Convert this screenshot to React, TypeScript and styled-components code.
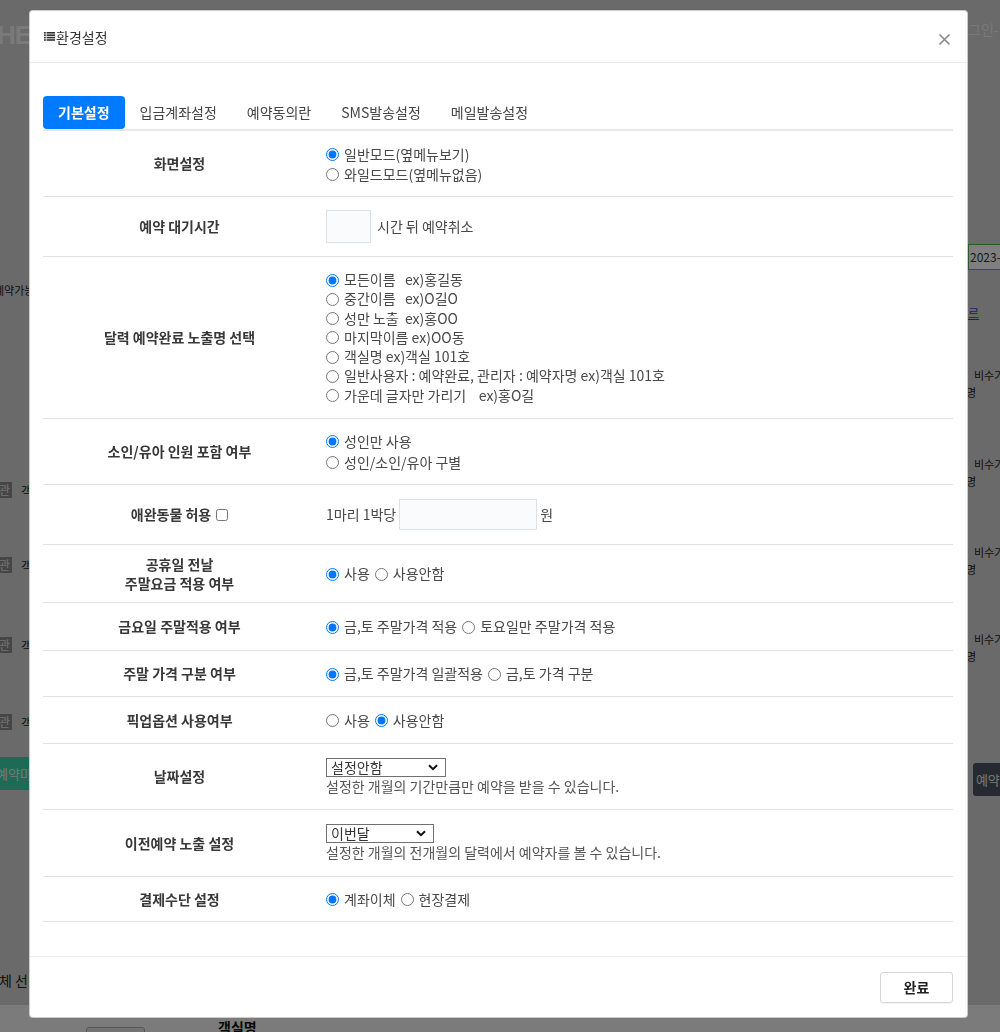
import React from 'react';
import styled, { createGlobalStyle } from 'styled-components';

const GlobalStyle = createGlobalStyle`
  html, body {
    margin: 0;
    padding: 0;
  }
  body {
    width: 1000px;
    height: 1032px;
    overflow: hidden;
    font-family: 'Noto Sans CJK KR', 'Noto Sans', sans-serif;
    font-size: 14px;
    color: #333;
  }
`;

/* ---------- page behind the dialog ---------- */

const Backdrop = styled.div`
  width: 1000px;
  height: 1032px;
  background: #d4d4d4;
  display: flex;
  flex-direction: column;
  overflow: hidden;
`;

const BackMain = styled.div`
  flex: 1;
  display: flex;
  justify-content: space-between;
`;

const Rail = styled.div<{ $w: number }>`
  width: ${p => p.$w}px;
  display: flex;
  flex-direction: column;
  align-items: flex-start;
  white-space: nowrap;
`;

const BgLogo = styled.div`
  margin: 22px 0 0 -3px;
  font-family: 'Liberation Sans', sans-serif;
  font-size: 26px;
  line-height: 26px;
  font-weight: bold;
  letter-spacing: -1px;
  color: #f4f4f4;
`;

const BgText = styled.div<{ $mt: number; $ml?: number; $color?: string; $size?: number }>`
  margin-top: ${p => p.$mt}px;
  margin-left: ${p => p.$ml ?? 0}px;
  font-size: ${p => p.$size ?? 11}px;
  line-height: 14px;
  color: ${p => p.$color ?? '#222'};
`;

const BgBadgeRow = styled.div<{ $mt: number }>`
  margin-top: ${p => p.$mt}px;
  display: flex;
  align-items: center;
  gap: 9px;
  height: 16px;
  font-size: 12px;
  color: #222;
`;

const BgBadge = styled.span`
  background: #8c8c8c;
  color: #e8e8e8;
  padding: 0 2px;
  line-height: 16px;
  margin-left: -3px;
`;

const BgButton = styled.div<{ $mt: number; $bg: string; $ml?: number }>`
  margin-top: ${p => p.$mt}px;
  margin-left: ${p => p.$ml ?? 0}px;
  height: 33px;
  padding: 0 8px 0 0;
  border-radius: 3px;
  background: ${p => p.$bg};
  color: #eee;
  font-size: 13px;
  line-height: 33px;
`;

const BgInput = styled.div`
  margin-top: 208px;
  width: 40px;
  height: 26px;
  box-sizing: border-box;
  border: 1px solid #52b752;
  background: #fff;
  font-size: 12px;
  line-height: 24px;
  padding-left: 1px;
  color: #333;
`;

const BgLink = styled.div`
  margin-top: 36px;
  font-size: 12px;
  line-height: 14px;
  color: #1a4bd6;
  text-decoration: underline;
`;

const BackBottom = styled.div`
  height: 27px;
  background: #f7f7f7;
  display: flex;
  align-items: flex-start;
  padding-left: 86px;
`;

const BgBox = styled.div`
  margin-top: 22px;
  width: 57px;
  height: 14px;
  border: 1px solid #aaa;
  border-radius: 3px;
  background: #e6e6e6;
`;

const BgHeading = styled.div`
  margin: 12px 0 0 73px;
  font-size: 14px;
  font-weight: bold;
  color: #111;
`;

/* ---------- dialog ---------- */

const Overlay = styled.div`
  position: fixed;
  inset: 0;
  background: rgba(0, 0, 0, 0.5);
  display: flex;
  align-items: flex-start;
  padding: 10px 0 0 29px;
`;

const Modal = styled.div`
  width: 939px;
  height: 1008px;
  box-sizing: border-box;
  background: #fff;
  border: 1px solid rgba(0, 0, 0, 0.2);
  border-radius: 4px;
  display: flex;
  flex-direction: column;
`;

const Header = styled.div`
  height: 51px;
  flex-shrink: 0;
  display: flex;
  align-items: center;
  justify-content: space-between;
  padding: 0 17px 0 14px;
  border-bottom: 1px solid #e9ecef;
`;

const Title = styled.div`
  display: flex;
  align-items: center;
  gap: 1px;
  color: #333;
`;

const CloseButton = styled.button`
  border: 0;
  background: none;
  padding: 0;
  display: flex;
  margin-top: 5px;
  cursor: pointer;
`;

const Body = styled.div`
  flex: 1;
  padding: 33px 14px 0 13px;
`;

const TabBar = styled.div`
  display: flex;
  border-bottom: 2px solid #e8e8e8;
`;

const Tab = styled.div<{ $active?: boolean }>`
  height: 33px;
  line-height: 33px;
  padding: 0 15px;
  border-radius: 4px;
  white-space: nowrap;
  background: ${p => (p.$active ? '#007bff' : 'transparent')};
  color: ${p => (p.$active ? '#fff' : '#444')};
  font-weight: ${p => (p.$active ? 'bold' : 'normal')};
`;

const Row = styled.div<{ $h: number }>`
  display: grid;
  grid-template-columns: 273px 1fr;
  height: ${p => p.$h}px;
  box-sizing: border-box;
  border-bottom: 1px solid #dee2e6;
`;

const Label = styled.div`
  display: flex;
  flex-direction: column;
  align-items: center;
  justify-content: center;
  text-align: center;
  font-weight: bold;
  color: #383838;
  line-height: 19px;
`;

const LabelLine = styled.div`
  display: flex;
  align-items: center;
  gap: 5px;
`;

const Cell = styled.div<{ $lh?: number }>`
  display: flex;
  flex-direction: column;
  justify-content: center;
  align-items: flex-start;
  padding-left: 10px;
  color: #484848;
  line-height: ${p => p.$lh ?? 19}px;
  white-space: nowrap;
`;

const Inline = styled.div<{ $gap?: number }>`
  display: flex;
  align-items: center;
  gap: ${p => p.$gap ?? 5}px;
`;

const Option = styled.label`
  display: inline-flex;
  align-items: center;
  gap: 5px;
`;

const Radio = styled.input.attrs({ type: 'radio' })`
  margin: 1px 0 0 0;
  width: 13px;
  height: 13px;
  accent-color: #0075ff;
`;

const Check = styled.input.attrs({ type: 'checkbox' })`
  margin: 1px 0 0 0;
  width: 12px;
  height: 12px;
`;

const TextBox = styled.div<{ $w: number; $h: number }>`
  width: ${p => p.$w}px;
  height: ${p => p.$h}px;
  box-sizing: border-box;
  border: 1px solid #dde1e4;
  background: #fafbfc;
`;

const SelectBox = styled.div<{ $w: number }>`
  width: ${p => p.$w}px;
  height: 19px;
  box-sizing: border-box;
  border: 1px solid #707070;
  background: #fff;
  display: flex;
  align-items: center;
  justify-content: space-between;
  padding: 0 7px 0 4px;
  color: #333;
  line-height: 17px;
`;

const Help = styled.div`
  color: #555;
`;

const Footer = styled.div`
  height: 60px;
  flex-shrink: 0;
  border-top: 1px solid #e9ecef;
  display: flex;
  align-items: center;
  justify-content: flex-end;
  padding-right: 14px;
`;

const DoneButton = styled.button`
  width: 73px;
  height: 31px;
  border: 1px solid #d6d6d6;
  border-radius: 3px;
  background: #fff;
  font-family: inherit;
  font-size: 14px;
  font-weight: bold;
  color: #222;
  box-shadow: 0 1px 1px rgba(0, 0, 0, 0.05);
`;

/* ---------- icons ---------- */

const ListIcon = () => (
  <svg width="11" height="9" viewBox="0 0 11 9">
    {[0, 2.4, 4.8, 7.2].map(y => (
      <g key={y} fill="#333">
        <rect x="0" y={y} width="1.8" height="1.6" />
        <rect x="2.6" y={y} width="8.4" height="1.6" />
      </g>
    ))}
  </svg>
);

const CloseIcon = () => (
  <svg width="11" height="11" viewBox="0 0 11 11">
    <path d="M1 1 L10 10 M10 1 L1 10" stroke="#8a8a8a" strokeWidth="1.7" strokeLinecap="round" />
  </svg>
);

const Chevron = () => (
  <svg width="10" height="7" viewBox="0 0 10 7">
    <path d="M1 1.2 L5 5.2 L9 1.2" stroke="#111" strokeWidth="2" fill="none" />
  </svg>
);

/* ---------- data ---------- */

const nameOptions = [
  '모든이름\u00a0\u00a0\u00a0ex)홍길동',
  '중간이름\u00a0\u00a0\u00a0ex)O길O',
  '성만 노출\u00a0\u00a0ex)홍OO',
  '마지막이름 ex)OO동',
  '객실명 ex)객실 101호',
  '일반사용자 : 예약완료, 관리자 : 예약자명 ex)객실 101호',
  '가운데 글자만 가리기\u00a0\u00a0\u00a0\u00a0ex)홍O길',
];

const tabs = ['기본설정', '입금계좌설정', '예약동의란', 'SMS발송설정', '메일발송설정'];

const RadioGroup = ({
  name,
  options,
  checked,
  inline,
}: {
  name: string;
  options: string[];
  checked: number;
  inline?: boolean;
}) => {
  const items = options.map((label, i) => (
    <Option key={label}>
      <Radio name={name} defaultChecked={i === checked} />
      {label}
    </Option>
  ));
  return inline ? <Inline>{items}</Inline> : <>{items}</>;
};

const BgRoomLabels = [{ mt: 185 }, { mt: 59 }, { mt: 64 }, { mt: 61 }];

const BgSeasonRows = [{ mt: 48 }, { mt: 58 }, { mt: 57 }, { mt: 56 }];

export default function App() {
  return (
    <>
      <GlobalStyle />
      <Backdrop>
        <BackMain>
          <Rail $w={29}>
            <BgLogo>HE</BgLogo>
            <BgText $mt={235} $ml={-6}>예약가능</BgText>
            {BgRoomLabels.map(({ mt }) => (
              <BgBadgeRow key={mt} $mt={mt}>
                <BgBadge>관</BgBadge>
                <span>객</span>
              </BgBadgeRow>
            ))}
            <BgButton $mt={27} $bg="#3ad6a8" $ml={-4}>예약마감</BgButton>
            <BgText $mt={183} $size={14} $ml={-1}>체 선</BgText>
          </Rail>
          <Rail $w={32}>
            <BgText $mt={22} $size={14} $color="#f2f2f2">그인-</BgText>
            <BgInput>2023-0</BgInput>
            <BgLink>르</BgLink>
            {BgSeasonRows.map(({ mt }) => (
              <React.Fragment key={mt}>
                <BgText $mt={mt} $ml={6}>비수기</BgText>
                <BgText $mt={3} $ml={-2}>명</BgText>
              </React.Fragment>
            ))}
            <BgButton $mt={100} $bg="#4c5262" $ml={5}>&nbsp;예약</BgButton>
          </Rail>
        </BackMain>
        <BackBottom>
          <BgBox />
          <BgHeading>객실명</BgHeading>
        </BackBottom>
      </Backdrop>

      <Overlay>
        <Modal>
          <Header>
            <Title>
              <ListIcon />
              환경설정
            </Title>
            <CloseButton aria-label="close">
              <CloseIcon />
            </CloseButton>
          </Header>

          <Body>
            <TabBar>
              {tabs.map((t, i) => (
                <Tab key={t} $active={i === 0}>
                  {t}
                </Tab>
              ))}
            </TabBar>

            <Row $h={66}>
              <Label>화면설정</Label>
              <Cell $lh={20}>
                <RadioGroup name="screen" options={['일반모드(옆메뉴보기)', '와일드모드(옆메뉴없음)']} checked={0} />
              </Cell>
            </Row>

            <Row $h={60}>
              <Label>예약 대기시간</Label>
              <Cell>
                <Inline $gap={6}>
                  <TextBox $w={45} $h={33} />
                  시간 뒤 예약취소
                </Inline>
              </Cell>
            </Row>

            <Row $h={162}>
              <Label>달력 예약완료 노출명 선택</Label>
              <Cell $lh={19.2}>
                <RadioGroup name="display" options={nameOptions} checked={0} />
              </Cell>
            </Row>

            <Row $h={66}>
              <Label>소인/유아 인원 포함 여부</Label>
              <Cell $lh={21}>
                <RadioGroup name="child" options={['성인만 사용', '성인/소인/유아 구별']} checked={0} />
              </Cell>
            </Row>

            <Row $h={60}>
              <Label>
                <LabelLine>
                  애완동물 허용
                  <Check />
                </LabelLine>
              </Label>
              <Cell>
                <Inline $gap={3}>
                  1마리 1박당
                  <TextBox $w={138} $h={31} />
                  원
                </Inline>
              </Cell>
            </Row>

            <Row $h={58}>
              <Label>
                <div>공휴일 전날</div>
                <div>주말요금 적용 여부</div>
              </Label>
              <Cell>
                <RadioGroup name="holiday" options={['사용', '사용안함']} checked={0} inline />
              </Cell>
            </Row>

            <Row $h={48}>
              <Label>금요일 주말적용 여부</Label>
              <Cell>
                <RadioGroup
                  name="friday"
                  options={['금,토 주말가격 적용', '토요일만 주말가격 적용']}
                  checked={0}
                  inline
                />
              </Cell>
            </Row>

            <Row $h={46}>
              <Label>주말 가격 구분 여부</Label>
              <Cell>
                <RadioGroup
                  name="weekend"
                  options={['금,토 주말가격 일괄적용', '금,토 가격 구분']}
                  checked={0}
                  inline
                />
              </Cell>
            </Row>

            <Row $h={47}>
              <Label>픽업옵션 사용여부</Label>
              <Cell>
                <RadioGroup name="pickup" options={['사용', '사용안함']} checked={1} inline />
              </Cell>
            </Row>

            <Row $h={66}>
              <Label>날짜설정</Label>
              <Cell>
                <SelectBox $w={120}>
                  설정안함
                  <Chevron />
                </SelectBox>
                <Help>설정한 개월의 기간만큼만 예약을 받을 수 있습니다.</Help>
              </Cell>
            </Row>

            <Row $h={67}>
              <Label>이전예약 노출 설정</Label>
              <Cell>
                <SelectBox $w={108}>
                  이번달
                  <Chevron />
                </SelectBox>
                <Help>설정한 개월의 전개월의 달력에서 예약자를 볼 수 있습니다.</Help>
              </Cell>
            </Row>

            <Row $h={45}>
              <Label>결제수단 설정</Label>
              <Cell>
                <RadioGroup name="pay" options={['계좌이체', '현장결제']} checked={0} inline />
              </Cell>
            </Row>
          </Body>

          <Footer>
            <DoneButton>완료</DoneButton>
          </Footer>
        </Modal>
      </Overlay>
    </>
  );
}
